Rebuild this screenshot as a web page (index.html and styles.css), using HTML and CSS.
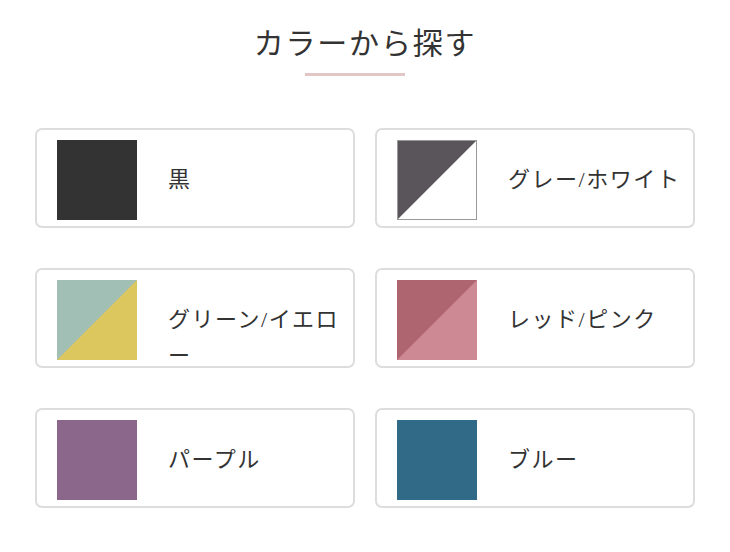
FILE: index.html
```html
<!DOCTYPE html>
<html lang="ja">
<head>
    <meta charset="UTF-8">
    <meta name="viewport" content="width=device-width, initial-scale=1.0">
    <title>カラーから探す</title>
    <link rel="stylesheet" href="styles.css">
</head>
<body>
    <div class="container">
        <h1 class="section-title">カラーから探す</h1>

        <ul class="color-list">
            <li class="color-item">
                <span class="swatch swatch-black"></span>
                <span class="color-name">黒</span>
            </li>
            <li class="color-item">
                <span class="swatch swatch-gray"></span>
                <span class="color-name">グレー/ホワイト</span>
            </li>
            <li class="color-item">
                <span class="swatch swatch-green"></span>
                <span class="color-name">グリーン/イエロー</span>
            </li>
            <li class="color-item">
                <span class="swatch swatch-red"></span>
                <span class="color-name">レッド/ピンク</span>
            </li>
            <li class="color-item">
                <span class="swatch swatch-purple"></span>
                <span class="color-name">パープル</span>
            </li>
            <li class="color-item">
                <span class="swatch swatch-blue"></span>
                <span class="color-name">ブルー</span>
            </li>
        </ul>
    </div>
</body>
</html>
```

FILE: styles.css
```css
body {
    font-family: "Liberation Serif", "Noto Sans CJK JP", serif;
    background-color: #fff;
    color: #333;
    margin: 0;
    padding: 0;
}

.container {
    width: 660px;
    margin: 0 auto;
    padding-top: 22px;
}

.section-title {
    font-size: 30px;
    font-weight: normal;
    letter-spacing: 0.06em;
    line-height: 44px;
    text-align: center;
    margin: 0;
}

/* underline sits a little left of the title's centre */
.section-title::after {
    content: "";
    display: block;
    width: 100px;
    height: 3px;
    margin: 7px 0 0 270px;
    background-color: #e2c6c6;
}

.color-list {
    list-style: none;
    margin: 52px 0 0;
    padding: 0;
    display: grid;
    grid-template-columns: 1fr 1fr;
    column-gap: 20px;
    row-gap: 40px;
}

.color-item {
    display: flex;
    align-items: flex-start;
    box-sizing: border-box;
    height: 100px;
    padding: 10px 6px 6px 20px;
    border: 2px solid #ddd;
    border-radius: 7px;
}

.swatch {
    flex: none;
    width: 80px;
    height: 80px;
    box-sizing: border-box;
}

.swatch-black {
    background-color: #333;
}

.swatch-gray {
    border: 1px solid #999;
    background: linear-gradient(to bottom right, #59555a 49.6%, #fff 50.4%);
}

.swatch-green {
    background: linear-gradient(to bottom right, #a2bfb5 49.6%, #dcc65e 50.4%);
}

.swatch-red {
    background: linear-gradient(to bottom right, #ae656f 49.6%, #cd8a95 50.4%);
}

.swatch-purple {
    background-color: #8a678b;
}

.swatch-blue {
    background-color: #316a87;
}

.color-name {
    font-size: 22px;
    letter-spacing: 0.07em;
    line-height: 36px;
    padding-top: 22px;
    margin-left: 31px;
}
```
